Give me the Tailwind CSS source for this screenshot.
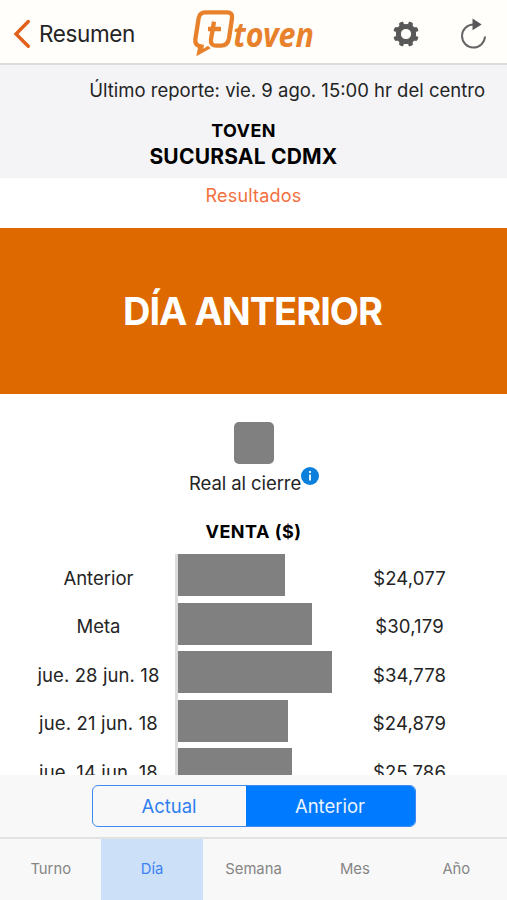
<!DOCTYPE html>
<html lang="es">
<head>
<meta charset="utf-8">
<meta name="viewport" content="width=device-width, initial-scale=1">
<title>Resultados</title>
<script src="https://cdn.jsdelivr.net/npm/@tailwindcss/browser@4"></script>
</head>
<body class="h-[900px] w-[507px] overflow-hidden bg-white font-['Inter',sans-serif] text-[#242424]">
<div class="flex h-full flex-col">
  <header class="flex h-[65px] shrink-0 items-center border-b-2 border-[#dcdcdc] bg-[#fffefb]">
    <a class="flex w-[180px] items-center pt-[4px] pl-[13px]">
      <svg class="h-[30px] w-[18px]" viewBox="0 0 18 30" fill="none" stroke="#e2601b" stroke-width="3.4" stroke-linecap="round" stroke-linejoin="miter"><path d="M15.3 2.5 3 15l12.300 12.300"/></svg>
      <span class="ml-[8px] text-[22.500px] leading-[30px] tracking-[-0.380px]">Resumen</span>
    </a>
    <svg class="h-[62px] w-[150px]" viewBox="0 0 450 186" fill="none">
      <path d="M64 137Q44 134 46 115L56 51Q59 34 76 34H141Q159 34 156 52L147 112Q143 134 122 134H110Q90 134 93 115L102 62M84 84H123" stroke="#e8812b" stroke-width="13"/>
      <path d="M49 166 56 130 72 131 70 143 84 134 92 142Z" fill="#e8812b"/>
      <text x="160" y="138" textLength="242" lengthAdjust="spacingAndGlyphs" font-family="Noto Sans" font-weight="700" font-style="italic" font-size="102" fill="#e8812b">toven</text>
    </svg>
    <svg class="mt-[4px] ml-[62px] h-[28px] w-[28px]" viewBox="-14 -14 28 28" fill="#585858">
      <path stroke="#585858" stroke-width="1" stroke-linejoin="round" fill-rule="evenodd" d="M0-9.300 2.600-9.500 3.200-12 6.300-10.800 6.200-8.200 8.200-6.200 10.800-6.300 12-3.200 9.500-2.600 9.500 2.600 12 3.200 10.800 6.300 8.200 6.200 6.200 8.200 6.300 10.800 3.200 12 2.600 9.500-2.600 9.500-3.200 12-6.300 10.800-6.200 8.200-8.200 6.200-10.800 6.300-12 3.200-9.500 2.600-9.500-2.600-12-3.200-10.800-6.300-8.200-6.200-6.200-8.200-6.300-10.800-3.200-12-2.600-9.500ZM5.600 0A5.600 5.600 0 1 0-5.600 0 5.600 5.600 0 1 0 5.600 0Z"/>
    </svg>
    <svg class="mt-[4px] ml-[39px] h-[34px] w-[30px]" viewBox="0 0 30 34" fill="none">
      <path d="M26 19.500A11.500 11.500 0 1 1 14.500 7.500" stroke="#666" stroke-width="2"/>
      <path d="M13.500 1.500 22.700 7.500 13.500 13.300Z" fill="#585858"/>
    </svg>
  </header>

  <section class="flex h-[113px] shrink-0 flex-col bg-[#f4f4f6]">
    <p class="mt-[11px] pr-[22px] text-right text-[18.500px] leading-[28px] whitespace-nowrap">Último reporte: vie. 9 ago. 15:00 hr del centro</p>
    <h2 class="mt-[15px] pr-[20px] text-center text-[18px] leading-[24px] font-bold tracking-[0.400px] text-black">TOVEN</h2>
    <h1 class="pr-[20px] text-center text-[21px] leading-[28px] font-bold tracking-[0.200px] text-black">SUCURSAL CDMX</h1>
  </section>
  <p class="h-[50px] shrink-0 text-center text-[18px] leading-[36px] tracking-[0.200px] text-[#f3703e]">Resultados</p>
  <section class="flex h-[166px] shrink-0 items-center justify-center bg-[#dd6900] pr-[2px] text-[38px] leading-none font-bold tracking-[-1px] text-white">DÍA ANTERIOR</section>

  <main class="flex min-h-0 flex-1 flex-col overflow-hidden">
    <div class="mt-[28px] ml-[234px] h-[42px] w-[40px] shrink-0 rounded-[5px] bg-[#808080]"></div>
    <div class="flex h-[38px] shrink-0 pl-[189px]">
      <span class="mt-[6px] text-[18.500px] leading-[26px] tracking-[-0.080px] whitespace-nowrap">Real al cierre</span>
      <svg class="mt-[3px] h-[18px] w-[18px] shrink-0" viewBox="0 0 18 18"><circle cx="9" cy="9" r="9" fill="#0b7fdc"/><path d="M9 4v2M9 7.500v6" stroke="#e6f4ff" stroke-width="2"/></svg>
    </div>
    <h3 class="mt-[16px] shrink-0 text-center text-[18px] leading-[28px] font-bold tracking-[0.500px] text-black">VENTA ($)</h3>
    <div class="mt-[8px] grid shrink-0 grid-cols-[175px_158px_1fr] text-[18.500px]">
      <div class="mt-[2.500px] flex flex-col gap-[6.500px] pl-[22px] text-center leading-[42px]">
        <span class="h-[42px]">Anterior</span><span class="h-[42px]">Meta</span><span class="h-[42px] tracking-[0.100px]">jue. 28 jun. 18</span><span class="h-[42px] tracking-[0.150px]">jue. 21 jun. 18</span><span class="h-[42px] tracking-[0.100px]">jue. 14 jun. 18</span>
      </div>
      <div class="flex flex-col gap-[6.500px] border-l-3 border-[#dcdcdc]">
        <div class="h-[42px] bg-[#808080]" style="width:107px"></div>
        <div class="h-[42px] bg-[#808080]" style="width:134px"></div>
        <div class="h-[42px] bg-[#808080]" style="width:154px"></div>
        <div class="h-[42px] bg-[#808080]" style="width:110px"></div>
        <div class="h-[42px] bg-[#808080]" style="width:114px"></div>
      </div>
      <div class="mt-[2.500px] flex flex-col gap-[6.500px] pr-[21px] text-center leading-[42px] tracking-[0.150px]">
        <span class="h-[42px]">$24,077</span><span class="h-[42px]">$30,179</span><span class="h-[42px]">$34,778</span><span class="h-[42px]">$24,879</span><span class="h-[42px]">$25,786</span>
      </div>
    </div>
  </main>

  <div class="flex h-[62px] shrink-0 justify-center bg-[#f8f8f8] pt-[10px]">
    <div class="flex h-[42px] w-[324px] overflow-hidden rounded-[6px] border border-[#3d8bf2] text-[18.500px] leading-[41px]">
      <button class="w-[153px] text-[#2f80ee]">Actual</button>
      <button class="flex-1 bg-[#007aff] text-[#eaf4ff]">Anterior</button>
    </div>
  </div>
  <nav class="grid h-[63px] shrink-0 grid-cols-5 border-t-2 border-[#e2e2e2] bg-[#f8f8f8] text-center text-[14.800px] leading-[61px] text-[#858585]">
    <a>Turno</a><a class="bg-[#cce0f8] text-[#3d82f5]">Día</a><a>Semana</a><a>Mes</a><a>Año</a>
  </nav>
</div>
</body>
</html>
